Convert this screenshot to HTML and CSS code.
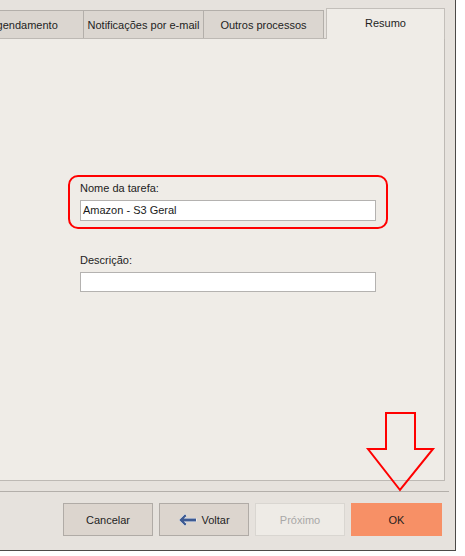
FILE: index.html
```html
<!DOCTYPE html>
<html lang="pt">
<head>
<meta charset="utf-8">
<title>Resumo</title>
<link rel="stylesheet" href="styles.css">
</head>
<body>
<div class="window">
  <div class="tabs">
    <div class="tab">Agendamento</div>
    <div class="tab">Notificações por e-mail</div>
    <div class="tab">Outros processos</div>
    <div class="tab active">Resumo</div>
  </div>
  <div class="panel">
    <div class="field">
      <label class="label">Nome da tarefa:</label>
      <div class="input">Amazon - S3 Geral</div>
    </div>
    <div class="field second">
      <label class="label">Descrição:</label>
      <div class="input short"></div>
    </div>
    <div class="highlight"></div>
  </div>
  <div class="separator"></div>
  <div class="buttons">
    <div class="btn">Cancelar</div>
    <div class="btn"><svg class="back-icon" width="19" height="14" viewBox="0 0 19 14"><path d="M1.2 7 L7 1.3 L8.6 2.9 L5.8 5.6 H18 V8.4 H5.8 L8.6 11.1 L7 12.7 Z" fill="#3d5a92" stroke="#ffffff" stroke-width="1" stroke-linejoin="round" paint-order="stroke"/></svg>Voltar</div>
    <div class="btn disabled">Próximo</div>
    <div class="btn primary">OK</div>
  </div>
  <svg class="big-arrow" width="72" height="84" viewBox="0 0 72 84"><polygon points="21,3 50,3 50,39 68,39 35,80 3,39 21,39" fill="none" stroke="#ff0000" stroke-width="2"/></svg>
</div>
</body>
</html>
```
FILE: styles.css
```css
* { box-sizing: border-box; }
html, body { margin: 0; padding: 0; background: #ffffff; }
body {
  font-family: "Liberation Sans", Arial, sans-serif;
  font-size: 11px;
  color: #1e1e1e;
  width: 465px;
  height: 556px;
  overflow: hidden;
}
.window {
  position: relative;
  width: 456px;
  height: 551px;
  background: #e6e2dd;
  border-right: 1px solid #4c4a48;
  border-bottom: 1px solid #4c4a48;
  overflow: hidden;
  display: flex;
  flex-direction: column;
}
.tabs {
  display: flex;
  align-items: flex-end;
  margin-top: 8px;
  margin-left: -37px;
  height: 30px;
}
.tab {
  flex: none;
  width: 121px;
  height: 28px;
  margin-right: -1px;
  background: #dbd6d0;
  border: 1px solid #b3afaa;
  border-bottom: none;
  display: flex;
  align-items: center;
  justify-content: center;
  padding-top: 1px;
  white-space: nowrap;
}
.tab.active {
  position: relative;
  z-index: 2;
  width: 119px;
  height: 31px;
  margin-left: 3px;
  margin-bottom: -1px;
  background: #efece7;
  border-color: #c3bfba;
  padding-top: 0;
  padding-bottom: 3px;
}
.panel {
  position: relative;
  margin-left: -1px;
  width: 446px;
  height: 443px;
  background: #efece7;
  border: 1px solid #bdb9b4;
  padding: 142px 0 0 80px;
}
.field { display: flex; flex-direction: column; }
.field.second { margin-top: 32px; }
.label {
  height: 14px;
  line-height: 14px;
  margin-bottom: 5px;
  color: #222222;
}
.input {
  width: 296px;
  height: 21px;
  background: #ffffff;
  border: 1px solid #b4b2b0;
  padding-left: 2px;
  line-height: 19px;
  color: #1a1a1a;
}
.input.short { height: 20px; }
.highlight {
  position: absolute;
  left: 68px;
  top: 136px;
  width: 320px;
  height: 54px;
  border: 2px solid #ff0000;
  border-radius: 10px;
}
.separator {
  margin-top: 10px;
  width: 449px;
  height: 1px;
  background: #b3afaa;
}
.buttons {
  display: flex;
  gap: 6px;
  margin-top: 11px;
  margin-left: 63px;
}
.btn {
  width: 90px;
  height: 33px;
  background: #dcd5ce;
  border: 1px solid #b0aba6;
  display: flex;
  align-items: center;
  justify-content: center;
  gap: 4px;
  color: #1e1e1e;
}
.back-icon { flex: none; }
.btn.disabled {
  background: #eeebe6;
  border-color: #d9d6d1;
  color: #a9a8a6;
}
.btn.primary {
  background: #f79066;
  border-color: #f79066;
  width: 91px;
}
.big-arrow {
  position: absolute;
  left: 365px;
  top: 410px;
}
```
